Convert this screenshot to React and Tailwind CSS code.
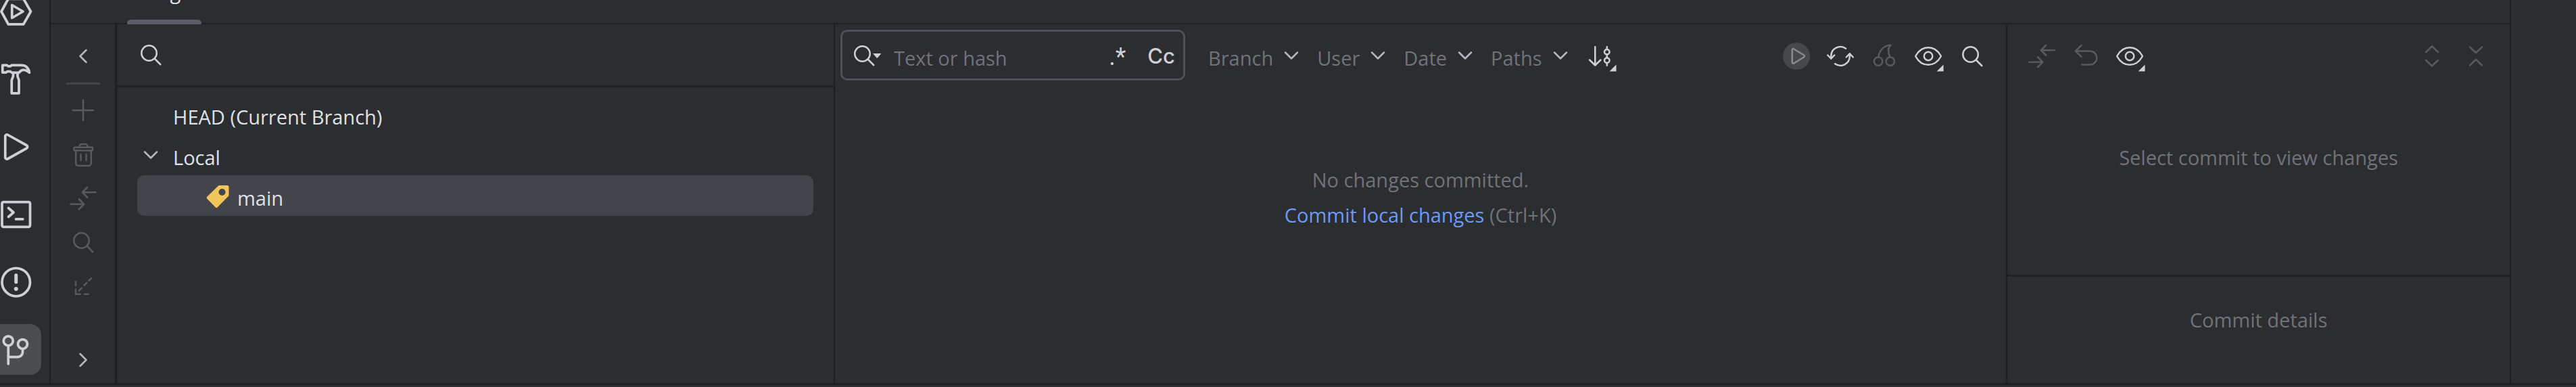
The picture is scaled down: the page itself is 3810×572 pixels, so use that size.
import clsx from "clsx";

const Icon = ({ children, className = "text-[#ced0d6]" }) => (
	<svg
		viewBox="0 0 16 16"
		className={clsx("size-10 shrink-0 overflow-visible", className)}
		fill="none"
		stroke="currentColor"
		strokeLinecap="round"
		strokeLinejoin="round"
		aria-hidden="true"
	>
		{children}
	</svg>
);

const StripeIcon = ({ children }) => (
	<svg
		viewBox="0 0 20 20"
		className="size-[50px] shrink-0 text-[#ced0d6]"
		fill="none"
		stroke="currentColor"
		strokeWidth="1.5"
		strokeLinecap="round"
		strokeLinejoin="round"
		aria-hidden="true"
	>
		{children}
	</svg>
);

const Search = ({ className }) => (
	<Icon className={className}>
		<circle cx="7" cy="7" r="4.5" />
		<path d="M10.3 10.3L13.7 13.7" />
	</Icon>
);

const Eye = () => (
	<Icon>
		<path d="M15.4 7.7C13.8 4.9 11.2 2.9 8 2.9S2.2 4.9.6 7.7a.6.6 0 0 0 0 .6C2.2 11.1 4.8 13.1 8 13.1s5.8-2 7.4-4.8a.6.6 0 0 0 0-.6Z" />
		<circle cx="8" cy="8" r="2.5" />
		<path d="M17 13V17H13Z" fill="currentColor" stroke="none" />
	</Icon>
);

const Arrows = () => (
	<Icon className="text-[#5a5a5a]">
		<path d="M15.5 4.5H7.5M10.5 1.5L7.5 4.5L10.5 7.5" />
		<path d="M.5 11.5H8.5M5.5 8.5L8.5 11.5L5.5 14.5" />
	</Icon>
);

const ChevronDown = ({ className = "text-[#b4b8bf]" }) => (
	<Icon className={className}>
		<path d="M4.4 6.2L8 9.8L11.6 6.2" />
	</Icon>
);

const ToolButton = ({ label, disabled, children }) => (
	<button
		type="button"
		aria-label={label}
		disabled={disabled}
		className="flex size-[65px] shrink-0 items-center justify-center"
	>
		{children}
	</button>
);

const stripe = [
	{
		label: "Services",
		icon: (
			<>
				<path d="M5.3 17.5L1.2 10L5.3 2.5H14.3L18.6 10L14.3 17.5Z" />
				<path d="M7.5 6.2V13.8L14 10Z" />
			</>
		),
	},
	{
		label: "Build",
		icon: (
			<>
				<path d="M1.9 1.7H4.4L5.2 2.3H6.6L7.4 1.7H13C15.8 1.7 17.3 3.4 17.8 6.1C16 4.7 14 4.2 12.8 5L11.6 6.1H7.4L6.4 5.4H4.8L4 6H1.9Z" />
				<path d="M8.2 6.2V8.3L7.3 10.6V18.3H11.6V10.6L10.8 8.3V6.2" />
			</>
		),
	},
	{
		label: "Run",
		icon: <path d="M3.5 3.8A1 1 0 0 1 5 2.9L16.1 9.1A1 1 0 0 1 16.1 10.9L5 17.1A1 1 0 0 1 3.5 16.2Z" />,
	},
	{
		label: "Terminal",
		icon: (
			<>
				<rect x="1.6" y="2.6" width="16.6" height="14.7" rx=".9" />
				<path d="M5.4 6.2L8.4 8.8L5.4 11.4M9.8 12.7H13.9" />
			</>
		),
	},
	{
		label: "Problems",
		icon: (
			<>
				<circle cx="9.9" cy="10" r="8.3" />
				<path d="M9.9 5.9V10" strokeWidth="2" />
				<circle cx="9.9" cy="14" r="1.2" fill="currentColor" stroke="none" />
			</>
		),
	},
	{
		label: "Git",
		active: true,
		icon: (
			<>
				<circle cx="5.3" cy="4.7" r="2.8" />
				<circle cx="13.8" cy="6.6" r="2.8" />
				<path d="M5.3 7.5V18.3M5.3 14.2H11A2.8 2.8 0 0 0 13.8 11.4V9.4" />
			</>
		),
	},
];

const filters = ["Branch", "User", "Date", "Paths"];

const App = () => {
	return (
		<div className="flex min-h-screen flex-col overflow-hidden bg-[#2b2d30] font-['Open_Sans','Noto_Sans',sans-serif] text-[29px] leading-[52px] text-[#dfe1e5]">
			<div className="flex grow border-b-[3px] border-[#1e1f22]">
				{/* Tool window stripe */}
				<nav className="flex h-[566px] w-[75px] shrink-0 flex-col items-end justify-end gap-[25px] border-r-2 border-[#1e1f22] pr-3 pb-3">
					{stripe.map((item) => (
						<button
							key={item.label}
							type="button"
							aria-label={item.label}
							className={clsx(
								"flex size-[75px] shrink-0 items-center justify-center rounded-2xl",
								item.active && "bg-[#4b4c4f]"
							)}
						>
							<StripeIcon>{item.icon}</StripeIcon>
						</button>
					))}
				</nav>

				<div className="flex min-w-0 grow flex-col">
					<header className="flex h-9 items-end border-b-2 border-[#1e1f22] pl-[113px]">
						<button
							type="button"
							className="relative -mb-0.5 flex h-24 w-[110px] shrink-0 items-center justify-center"
						>
							Log
							<span className="absolute inset-x-0 bottom-0 h-[7px] rounded-t-md rounded-b-xs bg-[#5a5d65]" />
						</button>
					</header>

					<div className="flex grow">
						<div className="flex w-[98px] shrink-0 flex-col items-center border-r-[3px] border-[#1e1f22] pt-3.5 pb-0.5">
							<ToolButton label="Hide branches">
								<Icon className="text-[#b4b8bf]">
									<path d="M9.8 4.4L6.2 8L9.8 11.6" />
								</Icon>
							</ToolButton>
							<hr className="mt-[7px] mb-[5px] w-[50px] border-t-[3px] border-[#43454a]" />
							<ToolButton label="New branch" disabled>
								<Icon className="text-[#5a5a5a]">
									<path d="M8 2V14M2 8H14" />
								</Icon>
							</ToolButton>
							<ToolButton label="Delete branch" disabled>
								<Icon className="text-[#5a5a5a]">
									<rect x="2.6" y="3.9" width="11" height="1.9" rx=".3" />
									<path d="M5.8 3.9V3.4A1.4 1.4 0 0 1 7.2 2H9.2A1.4 1.4 0 0 1 10.6 3.4V3.9" />
									<path d="M3.7 5.8V13.4A1.4 1.4 0 0 0 5.1 14.8H11.3A1.4 1.4 0 0 0 12.7 13.4V5.8M6.6 8V11.6M9.8 8V11.6" />
								</Icon>
							</ToolButton>
							<ToolButton label="Compare with current" disabled>
								<Arrows />
							</ToolButton>
							<ToolButton label="Show my branches" disabled>
								<Search className="text-[#5a5a5a]" />
							</ToolButton>
							<ToolButton label="Update selected" disabled>
								<Icon className="text-[#5a5a5a]">
									<path d="M3.6 5.2V7.5M3.6 9.8V12.7H6.4M8.8 12.7H11" />
									<path d="M5.5 10.7L7.1 9.1M8.6 7.5L10.1 6M11.4 4.7L12.8 3.3" />
								</Icon>
							</ToolButton>
							<div className="mt-auto">
								<ToolButton label="More">
									<Icon className="text-[#b4b8bf]">
										<path d="M6.2 4.4L9.8 8L6.2 11.6" />
									</Icon>
								</ToolButton>
							</div>
						</div>

						{/* Branches */}
						<section className="w-[1062px] shrink-0 border-r-2 border-[#1e1f22]">
							<label className="flex h-[93px] items-center border-b-[3px] border-[#1e1f22] pl-[30px]">
								<Search />
								<input aria-label="Search branches" className="h-16 grow bg-transparent px-3 outline-none" />
							</label>
							<ul className="px-[30px] pt-2.5">
								<li className="flex h-[60px] items-center pt-2 pl-[53px]">HEAD (Current Branch)</li>
								<li className="flex h-[60px] items-center gap-[13px]">
									<ChevronDown />
									<span className="pt-2">Local</span>
								</li>
								<li className="flex h-[60px] items-center gap-2 rounded-[10px] bg-[#43454a] pl-[100px]">
									<Icon>
										<path
											d="M8.6 2H13.2A1 1 0 0 1 14.2 3V7.7A1 1 0 0 1 13.9 8.4L7.5 14.9A.9.9 0 0 1 6.2 14.9L1.3 9.9A.9.9 0 0 1 1.3 8.7L7.9 2.3A1 1 0 0 1 8.6 2ZM10.2 4A2 2 0 1 0 10.2 8A2 2 0 0 0 10.2 4Z"
											fill="#f2c55c"
											fillRule="evenodd"
											stroke="none"
										/>
									</Icon>
									<span className="pt-2">main</span>
								</li>
							</ul>
						</section>

						{/* Commit log */}
						<section className="flex min-w-0 grow flex-col border-r-2 border-[#1e1f22]">
							<div className="flex items-start pt-2 pr-[18px] pl-2 text-[#6f737a]">
								<div className="flex h-[75px] w-[510px] items-center rounded-[10px] border-[3px] border-[#4e5157] px-3">
									<Icon>
										<circle cx="7" cy="7" r="4.5" />
										<path d="M10.3 10.3L13.7 13.7" />
										<path d="M13.2 6.8H18.2L15.7 9.7Z" fill="currentColor" stroke="none" />
									</Icon>
									<input
										aria-label="Text or hash"
										placeholder="Text or hash"
										className="ml-6 h-16 w-0 grow bg-transparent pt-2 outline-none placeholder:text-[#6f737a]"
									/>
									<button type="button" aria-label="Regex" className="mr-8 pt-1 font-['Roboto',sans-serif] text-[36px] text-[#ced0d6]">
										.*
									</button>
									<button type="button" aria-label="Match case" className="pt-0.5 font-['Inter',sans-serif] text-[31px] font-medium text-[#ced0d6]">
										Cc
									</button>
								</div>
								<div className="ml-[34px] flex h-[75px] items-center gap-[18px]">
									{filters.map((name) => (
										<label key={name} className="flex items-center gap-[7px]">
											<select aria-label={name} className="field-sizing-content appearance-none bg-transparent pt-2 outline-none">
												<option>{name}</option>
											</select>
											<ChevronDown />
										</label>
									))}
								</div>
								<div className="mt-1.5 ml-2">
									<ToolButton label="Sort">
										<Icon>
											<path d="M4.5 2.5V13.2M1.2 10.2L4.5 13.4L7.8 10.2" />
											<circle cx="11.5" cy="5.5" r="1.5" />
											<circle cx="11.5" cy="10.5" r="1.5" />
											<path d="M11.5 2.5V4M11.5 7V9M11.5 12V13.5" />
											<path d="M17 13V17H13Z" fill="currentColor" stroke="none" />
										</Icon>
									</ToolButton>
								</div>
								<div className="mt-1.5 ml-auto flex">
									<ToolButton label="Run" disabled>
										<Icon className="text-[#868a91]">
											<circle cx="8" cy="8" r="8" fill="#47484b" stroke="none" />
											<path d="M5.5 4.3A.6.6 0 0 1 6.5 3.8L12.4 7.4A.7.7 0 0 1 12.4 8.6L6.5 12.2A.6.6 0 0 1 5.5 11.7Z" />
										</Icon>
									</ToolButton>
									<ToolButton label="Refresh">
										<Icon>
											<path d="M11.2 3.5A5.5 5.5 0 0 0 2.5 8V9.5M.5 7.4L2.5 9.5L4.5 7.4" />
											<path d="M4.8 12.5A5.5 5.5 0 0 0 13.5 8V6.5M11.5 8.6L13.5 6.5L15.5 8.6" />
										</Icon>
									</ToolButton>
									<ToolButton label="Cherry-pick" disabled>
										<Icon className="text-[#5a5a5a]">
											<circle cx="4.4" cy="11.1" r="2.5" />
											<circle cx="11.5" cy="11.1" r="2.5" />
											<path d="M4.5 8.6C4.8 5 7.5 1.6 11.8 1.5C9.8 3.2 10.2 5.6 11.3 8.6" />
										</Icon>
									</ToolButton>
									<ToolButton label="View options">
										<Eye />
									</ToolButton>
									<ToolButton label="Find">
										<Search />
									</ToolButton>
								</div>
							</div>
							<div className="pt-[121px] text-center text-[#6f737a]">
								<p>No changes committed.</p>
								<p>
									<a href="#commit" className="text-[#6b9bfa]">
										Commit local changes
									</a>{" "}
									(Ctrl+K)
								</p>
							</div>
						</section>

						{/* Changes and details */}
						<aside className="flex w-[743px] shrink-0 flex-col text-center text-[#6f737a]">
							<div className="h-[373px] border-b-[3px] border-[#1e1f22]">
								<div className="flex px-[18px] pt-3.5">
									<ToolButton label="Show diff" disabled>
										<Arrows />
									</ToolButton>
									<ToolButton label="Revert" disabled>
										<Icon className="text-[#5a5a5a]">
											<path d="M5.4 1.6L1.9 5L5.4 8.4M1.9 5H10.5A4 4 0 0 1 10.5 13H5.7" />
										</Icon>
									</ToolButton>
									<ToolButton label="View options">
										<Eye />
									</ToolButton>
									<div className="ml-auto flex">
										<ToolButton label="Expand all" disabled>
											<Icon className="text-[#5a5a5a]">
												<path d="M4.4 5.6L8 2.2L11.6 5.6M4.4 10.4L8 13.8L11.6 10.4" />
											</Icon>
										</ToolButton>
										<ToolButton label="Collapse all" disabled>
											<Icon className="text-[#5a5a5a]">
												<path d="M4.4 2.6L8 6L11.6 2.6M4.4 13.4L8 10L11.6 13.4" />
											</Icon>
										</ToolButton>
									</div>
								</div>
								<p className="pt-[92px]">Select commit to view changes</p>
							</div>
							<p className="pt-[38px]">Commit details</p>
						</aside>
					</div>
				</div>

				<div className="w-[98px] shrink-0 border-l-2 border-[#1e1f22]" />
			</div>
			<div className="h-[3px]" />
		</div>
	);
};

export default App;
